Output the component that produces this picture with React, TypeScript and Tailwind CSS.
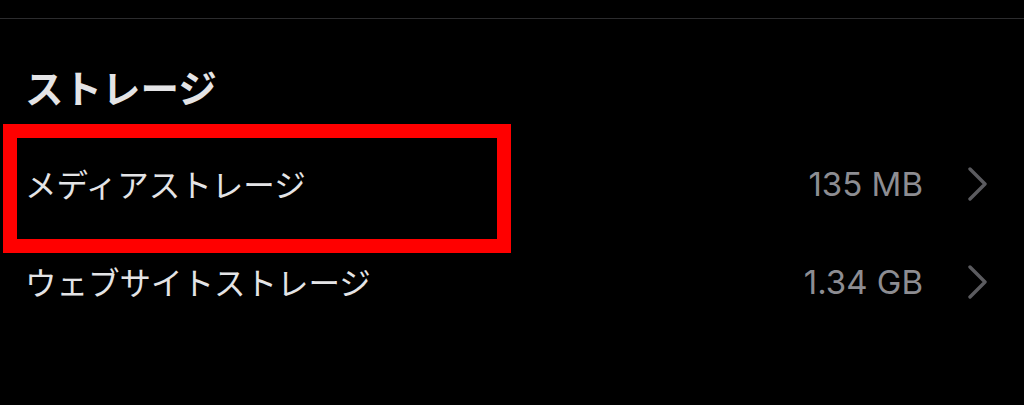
const jp = { fontFamily: '"Noto Sans CJK JP", "Noto Sans", sans-serif' };

function Chevron() {
  return (
    <svg width="22" height="34" viewBox="0 0 22 34" fill="none" className="shrink-0">
      <polyline
        points="3,2 18,17 3,32"
        stroke="#5b5b5f"
        strokeWidth="3.4"
        strokeLinecap="round"
        strokeLinejoin="round"
      />
    </svg>
  );
}

function Row({ label, value }: { label: string; value: string }) {
  return (
    <div className="flex h-[98px] items-center pl-[25px] pr-[35px]">
      <span className="flex-1 text-[31.5px] leading-none text-[#e4e4e6]" style={jp}>
        {label}
      </span>
      <span className="text-[33px] leading-none text-[#8d8d92] font-['Inter',sans-serif]">{value}</span>
      <span className="ml-[44px] flex">
        <Chevron />
      </span>
    </div>
  );
}

export default function App() {
  return (
    <div className="relative h-[405px] w-full overflow-hidden bg-black">
      <div className="h-[18px]" />
      <div className="h-px bg-[#2c2c2e]" />
      <h2
        className="mt-[43px] h-[48px] pl-[25px] text-[38.5px] font-bold leading-[48px] text-[#e4e4e6]"
        style={jp}
      >
        ストレージ
      </h2>
      <div className="mt-[25px]">
        <Row label="メディアストレージ" value="135 MB" />
        <Row label="ウェブサイトストレージ" value="1.34 GB" />
      </div>
      <div className="pointer-events-none absolute left-[3px] top-[124px] h-[129px] w-[508px] border-[14px] border-[#ff0000]" />
    </div>
  );
}
